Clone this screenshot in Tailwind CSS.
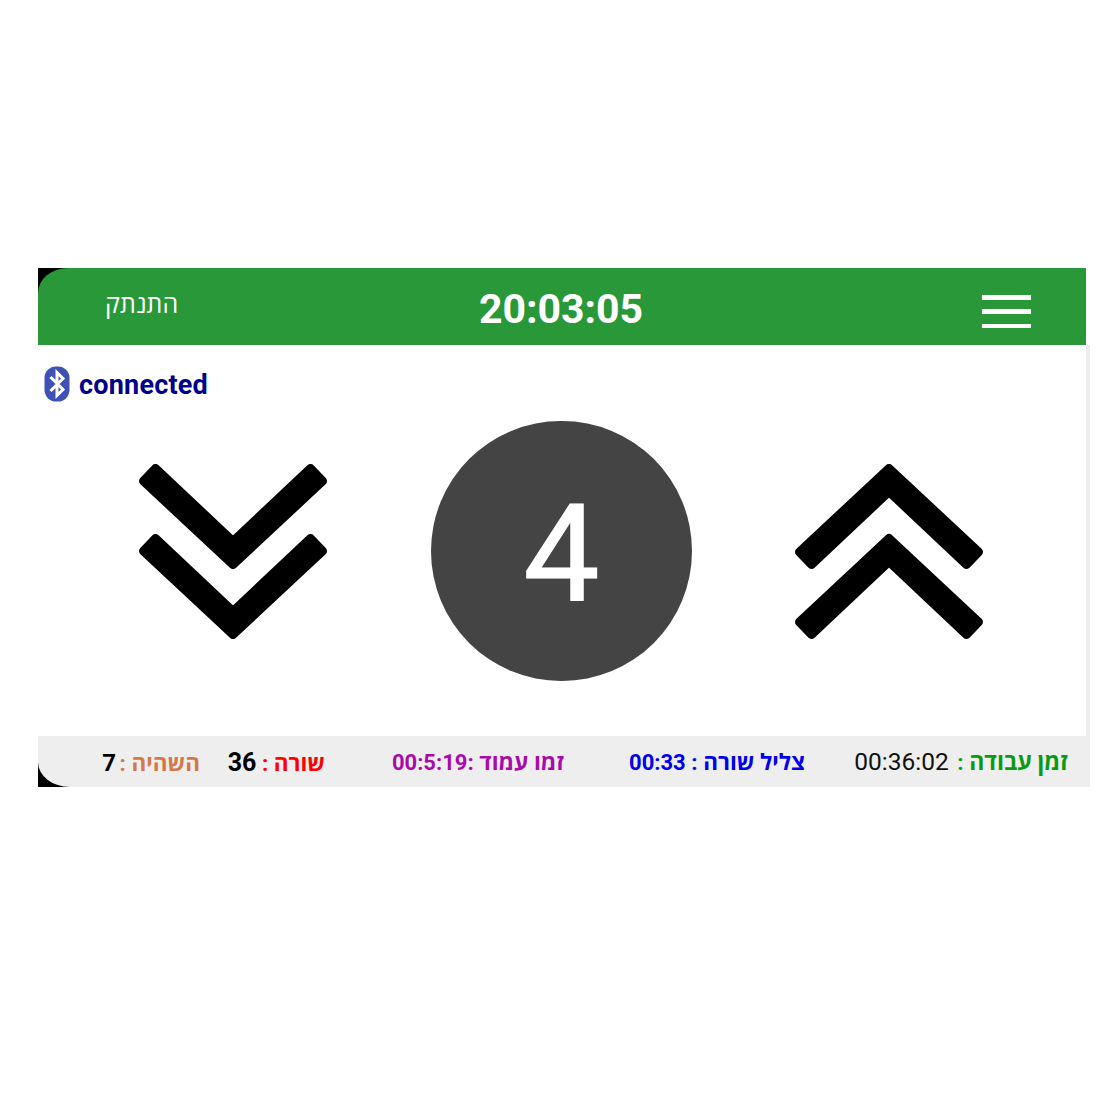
<!doctype html>
<html lang="he">
<head>
<meta charset="utf-8">
<script src="https://cdn.jsdelivr.net/npm/@tailwindcss/browser@4"></script>
</head>
<body class="bg-white font-['Roboto','Open_Sans','Liberation_Sans',sans-serif]">
<div class="w-[1110px] h-[1110px] pt-[268px] pl-[38px]">
  <div class="w-[1052px]">
    <div class="w-[1048px] bg-black">
      <header class="h-[77px] bg-[#299838] rounded-tl-[30px_25px] relative flex items-center justify-center text-white">
        <span dir="rtl" class="absolute left-[67px] top-[20px] text-[25px] leading-[34px]">התנתק</span>
        <span class="font-bold text-[41px] leading-[50px] mt-[4px] mr-[2px]">20:03:05</span>
        <span class="absolute left-[944px] top-[27px] w-[48.500px] flex flex-col gap-[9.750px]">
          <i class="block h-[4.500px] bg-white"></i><i class="block h-[4.500px] bg-white"></i><i class="block h-[4.500px] bg-white"></i>
        </span>
      </header>
    </div>
    <main class="w-[1052px] h-[391px] border-r-4 border-[#eeeeee] bg-white">
      <div class="flex items-center pl-[6px] pt-[21px] h-[56px]">
        <svg width="26" height="36" viewBox="0 0 26 36" class="block shrink-0">
          <rect x="0.500" y="0.500" width="25" height="35" rx="11.500" fill="#3f51b5"/>
          <path d="M6.500 11 L19 23.500 L13 29.500 V6.500 L19 12.500 L6.500 25" fill="none" stroke="#fff" stroke-width="3"/>
        </svg>
        <span class="ml-[9px] mt-[2px] font-bold text-[27px] leading-[32px] text-[#00008b] tracking-[0.2px]">connected</span>
      </div>
      <div class="flex items-center h-[260px] mt-[20px]">
        <svg width="188" height="175" viewBox="0 0 188 175" class="block ml-[101px] shrink-0">
          <g fill="#000" stroke="#000" stroke-width="9" stroke-linejoin="round">
            <path d="M94 100.500 L183.500 17 L171.500 4.500 L94 77.500 L16.500 4.500 L4.500 17 Z" />
            <path transform="translate(0 70)" d="M94 100.500 L183.500 17 L171.500 4.500 L94 77.500 L16.500 4.500 L4.500 17 Z" />
          </g>
        </svg>
        <div class="ml-[104px] w-[261px] h-[260px] rounded-full bg-[#444444] flex items-center justify-center text-white shrink-0">
          <span class="font-['Roboto'] font-normal text-[136px] leading-none mt-[6px] [-webkit-text-stroke:1px_#fff]">4</span>
        </div>
        <svg width="188" height="175" viewBox="0 0 188 175" class="block ml-[103px] shrink-0">
          <g fill="#000" stroke="#000" stroke-width="9" stroke-linejoin="round">
            <path d="M94 4.500 L183.500 88 L171.500 100.500 L94 27.500 L16.500 100.500 L4.500 88 Z" />
            <path transform="translate(0 70)" d="M94 4.500 L183.500 88 L171.500 100.500 L94 27.500 L16.500 100.500 L4.500 88 Z" />
          </g>
        </svg>
      </div>
    </main>
    <div class="bg-black w-[1052px]">
      <footer class="h-[51px] bg-[#eeeeee] rounded-bl-[32px_25px] flex items-center pt-[2px] text-[22.500px] leading-[28px] font-bold whitespace-nowrap">
        <span dir="rtl" class="ml-[64px] w-[98px] text-[#d2784b]">השהיה : <b class="text-black text-[24px] font-bold mr-[-2px]">7</b></span>
        <span dir="rtl" class="ml-[28px] w-[97px] text-[#ff0000]">שורה : <b class="text-black text-[25px] font-bold">36</b></span>
        <span dir="rtl" class="ml-[66px] w-[173px] text-[#a90aaa]">זמו עמוד :<span class="text-[22px]">00:5:19</span></span>
        <span dir="rtl" class="ml-[65px] w-[176px] text-[#0000ee]">צליל שורה : <span class="text-[22px]">00:33</span></span>
        <span dir="rtl" class="ml-[48px] w-[215px] text-[#0a9a12]"><span class="text-[23px]">זמן עבודה</span> : <b class="mr-[3px] text-[#111111] text-[24.500px] font-normal">00:36:02</b></span>
      </footer>
    </div>
  </div>
</div>
</body>
</html>
